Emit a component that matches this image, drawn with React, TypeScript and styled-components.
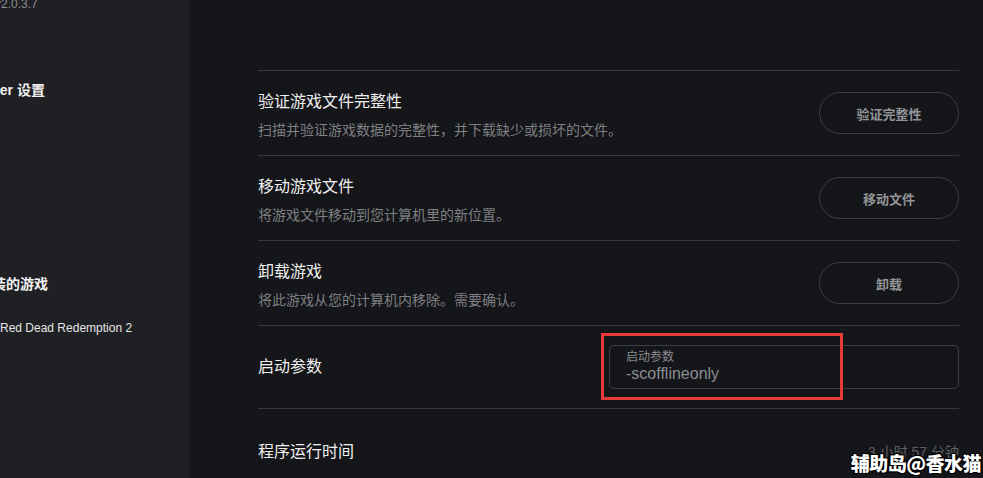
import React from "react";
import styled, { createGlobalStyle } from "styled-components";

const GlobalStyle = createGlobalStyle`
  html, body {
    margin: 0;
    padding: 0;
    background: #151619;
    overflow: hidden;
  }
  * { box-sizing: border-box; }
`;

const FONT = `"Liberation Sans", Arial, "Noto Sans CJK SC", sans-serif`;

const Page = styled.div`
  display: flex;
  width: 983px;
  height: 478px;
  overflow: hidden;
  position: relative;
  font-family: ${FONT};
  background: #151619;
`;

const Sidebar = styled.aside`
  width: 190px;
  flex: 0 0 190px;
  background: #1f2024;
  border-right: 2px solid #1a1b1e;
  overflow: hidden;
  display: flex;
  flex-direction: column;
`;

const Version = styled.div<{ $shift: number }>`
  margin-left: ${(p) => p.$shift}px;
  margin-top: -3px;
  font-size: 12px;
  line-height: 14px;
  color: #8b8c90;
  white-space: nowrap;
`;

const SideHeading = styled.div<{ $shift: number; $top: number }>`
  margin-left: ${(p) => p.$shift}px;
  margin-top: ${(p) => p.$top}px;
  font-size: 14px;
  line-height: 20px;
  font-weight: 700;
  color: #f2f2f2;
  white-space: nowrap;
`;

const SideItem = styled.div<{ $top: number }>`
  margin-top: ${(p) => p.$top}px;
  font-size: 12px;
  line-height: 16px;
  color: #e6e6e6;
  white-space: nowrap;
`;

const Main = styled.main`
  flex: 1;
  padding: 70px 24px 0 68px;
  display: flex;
  flex-direction: column;
`;

const Row = styled.div<{ $h: number }>`
  display: flex;
  align-items: center;
  justify-content: space-between;
  height: ${(p) => p.$h}px;
  border-top: 1px solid #38393d;
  flex: 0 0 auto;
`;

const TextBlock = styled.div`
  display: flex;
  flex-direction: column;
  padding-top: 5px;
`;

const Title = styled.div`
  font-size: 16px;
  line-height: 22px;
  color: #f0f0f0;
`;

const Desc = styled.div`
  margin-top: 7px;
  font-size: 14px;
  line-height: 20px;
  color: #7e7f83;
`;

const PillButton = styled.button`
  width: 140px;
  height: 42px;
  border-radius: 21px;
  border: 1px solid #3d3e42;
  background: transparent;
  color: #939498;
  font-family: ${FONT};
  font-size: 13px;
  font-weight: 700;
  cursor: pointer;
`;

const FieldWrap = styled.div`
  position: relative;
  width: 350px;
`;

const Field = styled.div`
  height: 44px;
  border: 1px solid #3c3d41;
  border-radius: 5px;
  padding: 4px 16px 0;
  display: flex;
  flex-direction: column;
`;

const FieldLabel = styled.div`
  font-size: 12px;
  line-height: 14px;
  color: #8a8b8f;
`;

const FieldValue = styled.div`
  margin-top: 1px;
  font-size: 16px;
  line-height: 18px;
  color: #8c8d91;
`;

const Highlight = styled.div`
  position: absolute;
  left: -8px;
  top: -12px;
  width: 242px;
  height: 67px;
  border: 3px solid #e8393c;
  pointer-events: none;
`;

const Value = styled.div`
  font-size: 14px;
  line-height: 20px;
  color: #5d5e62;
`;

const Watermark = styled.div`
  position: absolute;
  right: 2px;
  bottom: 4px;
  font-family: "Noto Sans CJK SC", sans-serif;
  font-size: 19px;
  line-height: 22px;
  font-weight: 900;
  color: #ffffff;
  letter-spacing: -0.5px;
  text-shadow:
    -1px -1px 0 #000, 1px -1px 0 #000, -1px 1px 0 #000, 1px 1px 0 #000,
    0 1px 0 #000, 0 -1px 0 #000, 1px 0 0 #000, -1px 0 0 #000;
`;

const actions = [
  {
    title: "验证游戏文件完整性",
    desc: "扫描并验证游戏数据的完整性，并下载缺少或损坏的文件。",
    button: "验证完整性",
  },
  {
    title: "移动游戏文件",
    desc: "将游戏文件移动到您计算机里的新位置。",
    button: "移动文件",
  },
  {
    title: "卸载游戏",
    desc: "将此游戏从您的计算机内移除。需要确认。",
    button: "卸载",
  },
];

export default function App() {
  return (
    <>
      <GlobalStyle />
      <Page>
        <Sidebar>
          <Version $shift={-5}>v2.0.3.7</Version>
          <SideHeading $shift={-50} $top={69}>
            Launcher 设置
          </SideHeading>
          <SideHeading $shift={-36} $top={174}>
            已安装的游戏
          </SideHeading>
          <SideItem $top={26}>Red Dead Redemption 2</SideItem>
        </Sidebar>
        <Main>
          {actions.map((a) => (
            <Row key={a.title} $h={85}>
              <TextBlock>
                <Title>{a.title}</Title>
                <Desc>{a.desc}</Desc>
              </TextBlock>
              <PillButton>{a.button}</PillButton>
            </Row>
          ))}
          <Row $h={83}>
            <Title>启动参数</Title>
            <FieldWrap>
              <Field>
                <FieldLabel>启动参数</FieldLabel>
                <FieldValue>-scofflineonly</FieldValue>
              </Field>
              <Highlight />
            </FieldWrap>
          </Row>
          <Row $h={87}>
            <Title>程序运行时间</Title>
            <Value>3 小时 57 分钟</Value>
          </Row>
        </Main>
        <Watermark>辅助岛@香水猫</Watermark>
      </Page>
    </>
  );
}
